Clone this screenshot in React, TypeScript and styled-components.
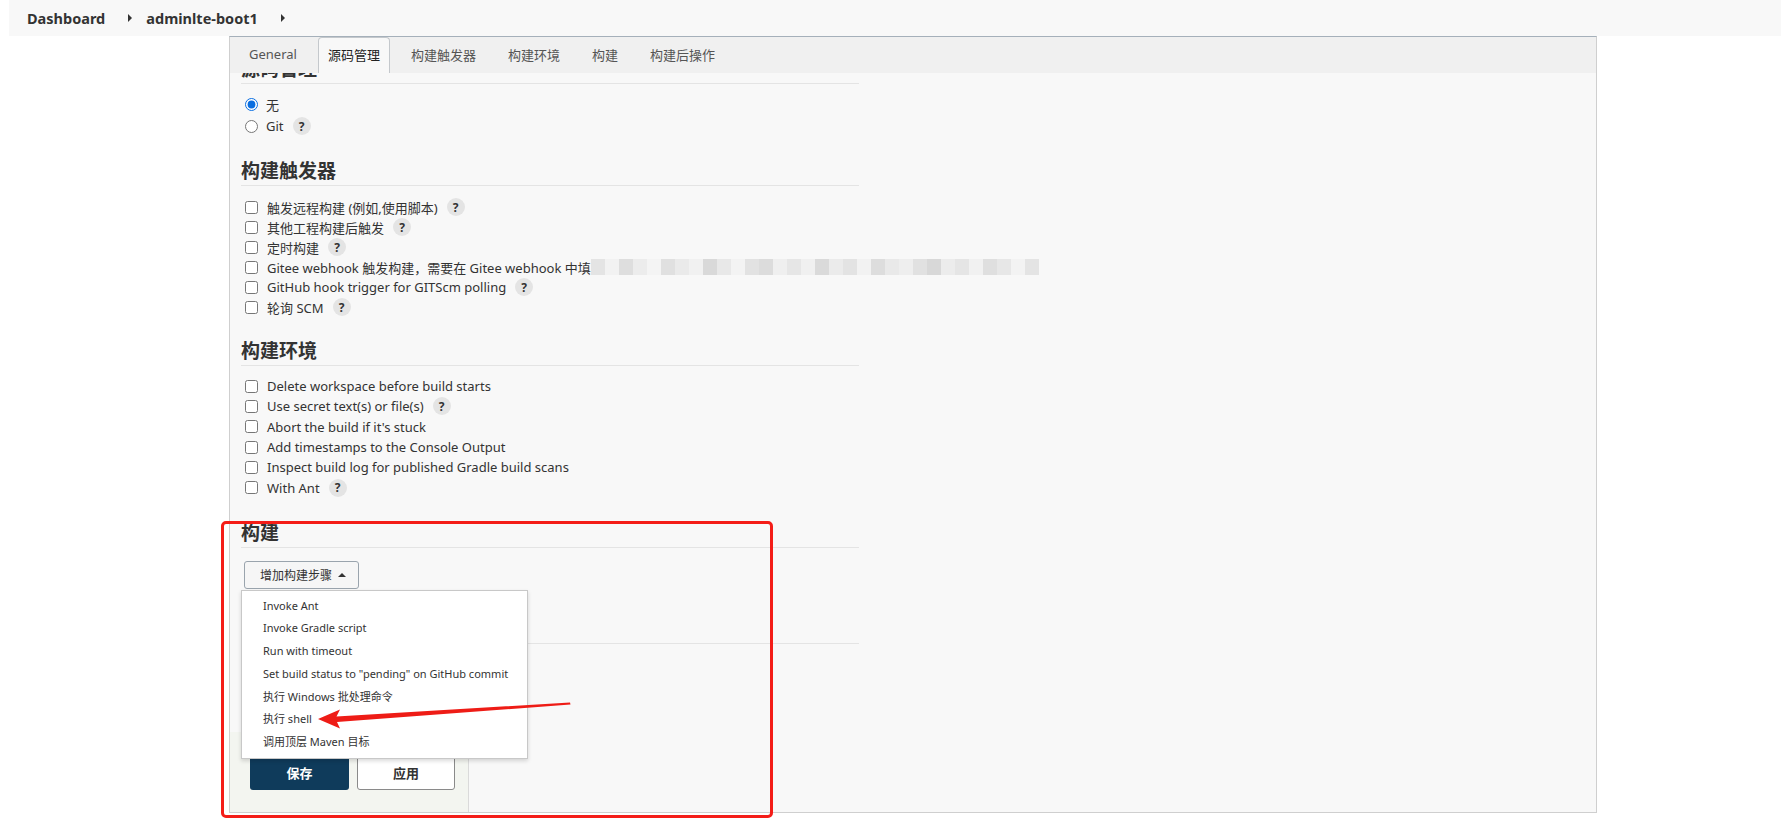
import styled, { createGlobalStyle } from "styled-components";

const GlobalStyle = createGlobalStyle`
  html, body {
    margin: 0;
    padding: 0;
    background: #ffffff;
  }
  body {
    font-family: "Segoe UI", "Noto Sans", "Noto Sans CJK SC", sans-serif;
    color: #333;
  }
`;

const tabs = ["General", "源码管理", "构建触发器", "构建环境", "构建", "构建后操作"];

const triggers = [
  { label: "触发远程构建 (例如,使用脚本)", help: true },
  { label: "其他工程构建后触发", help: true },
  { label: "定时构建", help: true },
  { label: "Gitee webhook 触发构建，需要在 Gitee webhook 中填", help: false, masked: true },
  { label: "GitHub hook trigger for GITScm polling", help: true },
  { label: "轮询 SCM", help: true },
];

const environment = [
  { label: "Delete workspace before build starts", help: false },
  { label: "Use secret text(s) or file(s)", help: true },
  { label: "Abort the build if it's stuck", help: false },
  { label: "Add timestamps to the Console Output", help: false },
  { label: "Inspect build log for published Gradle build scans", help: false },
  { label: "With Ant", help: true },
];

const buildSteps = [
  "Invoke Ant",
  "Invoke Gradle script",
  "Run with timeout",
  'Set build status to "pending" on GitHub commit',
  "执行 Windows 批处理命令",
  "执行 shell",
  "调用顶层 Maven 目标",
];

// pixelated blur behind the Gitee line
const mosaic = [
  "#e4e4e4", "#f2f2f2", "#dedede", "#ececec", "#f4f4f4", "#e0e0e0", "#eaeaea",
  "#f1f1f1", "#d9d9d9", "#e8e8e8", "#f3f3f3", "#e2e2e2", "#dcdcdc", "#efefef",
  "#e6e6e6", "#f0f0f0", "#dadada", "#ebebeb", "#e3e3e3", "#f2f2f2", "#dddddd",
  "#e9e9e9", "#eeeeee", "#e1e1e1", "#d8d8d8", "#ececec", "#e5e5e5", "#f1f1f1",
  "#dfdfdf", "#e7e7e7", "#f3f3f3", "#e4e4e4",
];

function Help() {
  return <HelpBadge>?</HelpBadge>;
}

function App() {
  return (
    <Page>
      <GlobalStyle />
      <Breadcrumbs>
        <Crumb>Dashboard</Crumb>
        <Caret />
        <Crumb>adminlte-boot1</Crumb>
        <Caret />
      </Breadcrumbs>

      <Panel>
        <TabBar>
          {tabs.map((t, i) => (
            <Tab key={t} $active={i === 1}>
              {t}
            </Tab>
          ))}
        </TabBar>

        <Content>
          <Column>
            <SectionTitle $first>源码管理</SectionTitle>
            <List $gap={10} $row={21.5}>
              <Row>
                <Radio type="radio" name="scm" defaultChecked />
                <Label>无</Label>
              </Row>
              <Row>
                <Radio type="radio" name="scm" />
                <Label>Git</Label>
                <Help />
              </Row>
            </List>

            <SectionTitle>构建触发器</SectionTitle>
            <List $gap={11} $row={20}>
              {triggers.map((t) => (
                <Row key={t.label}>
                  <Check type="checkbox" />
                  <Label>{t.label}</Label>
                  {t.help && <Help />}
                  {t.masked && (
                    <Mosaic>
                      {mosaic.map((c, i) => (
                        <MosaicCell key={i} $shade={c} />
                      ))}
                    </Mosaic>
                  )}
                </Row>
              ))}
            </List>

            <SectionTitle>构建环境</SectionTitle>
            <List $gap={10} $row={20.3}>
              {environment.map((t) => (
                <Row key={t.label}>
                  <Check type="checkbox" />
                  <Label>{t.label}</Label>
                  {t.help && <Help />}
                </Row>
              ))}
            </List>

            <SectionTitle $gap={23}>构建</SectionTitle>
            <StepArea>
              <StepButton>
                增加构建步骤 <UpCaret />
              </StepButton>
              <Menu>
                {buildSteps.map((s) => (
                  <MenuItem key={s}>{s}</MenuItem>
                ))}
              </Menu>
            </StepArea>

            <SectionTitle $gap={28}>构建后操作</SectionTitle>
          </Column>
        </Content>

        <BottomBar>
          <ButtonDock>
            <SaveButton>保存</SaveButton>
            <ApplyButton>应用</ApplyButton>
          </ButtonDock>
        </BottomBar>
      </Panel>

      <Highlight />
      <Arrow viewBox="0 0 260 36" width="260" height="36">
        <polygon
          points="3,23 25,13.5 21.5,20.5 255,6.5 255.5,8.5 22,26 25,32.5"
          fill="#ee1c16"
        />
      </Arrow>
    </Page>
  );
}

const Page = styled.div`
  position: relative;
  width: 1781px;
  height: 836px;
  overflow: hidden;
`;

const Breadcrumbs = styled.div`
  display: flex;
  align-items: center;
  height: 36px;
  margin-left: 9px;
  padding-left: 18px;
  background: #f8f8f8;
`;

const Crumb = styled.span`
  font-size: 14.5px;
  font-weight: 700;
  color: #333;
`;

const Caret = styled.span`
  width: 0;
  height: 0;
  margin: 0 14px 0 23px;
  border-left: 4px solid #333;
  border-top: 4px solid transparent;
  border-bottom: 4px solid transparent;
`;

const Panel = styled.div`
  display: flex;
  flex-direction: column;
  width: 1366px;
  height: 775px;
  margin-left: 229px;
  background: #f8f8f8;
  border: 1px solid #cfcfcf;
  border-top: 1px solid #a5b0ba;
`;

const TabBar = styled.div`
  position: relative;
  z-index: 1;
  display: flex;
  align-items: flex-end;
  flex-shrink: 0;
  height: 36px;
  padding-left: 3px;
  background: #f0f0f0;
`;

const Tab = styled.div<{ $active?: boolean }>`
  display: flex;
  align-items: center;
  height: 32px;
  padding: 0 ${(p) => (p.$active ? "9px" : "15px")} 3px;
  margin: 0 ${(p) => (p.$active ? "5px" : "0")};
  font-size: 13px;
  color: ${(p) => (p.$active ? "#222" : "#555")};
  background: ${(p) => (p.$active ? "#f8f8f8" : "transparent")};
  border: 1px solid ${(p) => (p.$active ? "#c4c8cc" : "transparent")};
  border-bottom: none;
  border-radius: 4px 4px 0 0;
`;

const Content = styled.div`
  flex: 1;
  padding-left: 11px;
`;

const Column = styled.div`
  width: 618px;
`;

const SectionTitle = styled.div<{ $first?: boolean; $gap?: number }>`
  height: 24px;
  line-height: 24px;
  margin-top: ${(p) => (p.$first ? -16 : p.$gap ?? 22)}px;
  padding-bottom: 2px;
  font-size: 19px;
  font-weight: 700;
  color: #333;
  border-bottom: 1px solid #e4e4e4;
`;

const List = styled.div<{ $gap: number; $row: number }>`
  display: flex;
  flex-direction: column;
  margin-top: ${(p) => p.$gap}px;

  & > label {
    height: ${(p) => p.$row}px;
  }
`;

const Row = styled.label`
  display: flex;
  align-items: center;
  font-size: 13px;
  white-space: nowrap;
`;

const Check = styled.input`
  width: 13px;
  height: 13px;
  margin: 0 9px 0 4px;
`;

const Radio = styled.input`
  width: 13px;
  height: 13px;
  margin: 0 8px 0 4px;
  accent-color: #0a6ee0;
`;

const Label = styled.span`
  color: #333;
`;

const HelpBadge = styled.span`
  display: inline-flex;
  align-items: center;
  justify-content: center;
  width: 18px;
  height: 18px;
  margin-left: 9px;
  border-radius: 50%;
  background: #e4e4e4;
  font-size: 12px;
  font-weight: 700;
  color: #333;
`;

const Mosaic = styled.span`
  display: inline-flex;
  height: 16px;
`;

const MosaicCell = styled.span<{ $shade: string }>`
  width: 14px;
  height: 16px;
  background: ${(p) => p.$shade};
`;

const StepArea = styled.div`
  position: relative;
  margin-top: 13px;
  padding-left: 3px;
`;

const StepButton = styled.button`
  display: flex;
  align-items: center;
  gap: 6px;
  width: 115px;
  height: 28px;
  padding: 0 0 0 15px;
  font-family: inherit;
  font-size: 12px;
  color: #333;
  background: #f6f6f6;
  border: 1px solid #9aa4ad;
  border-radius: 3px;
`;

const UpCaret = styled.span`
  width: 0;
  height: 0;
  border-bottom: 4px solid #333;
  border-left: 4px solid transparent;
  border-right: 4px solid transparent;
`;

const Menu = styled.div`
  position: absolute;
  z-index: 2;
  top: 29px;
  left: 0;
  width: 285px;
  padding: 4px 0 4px;
  background: #ffffff;
  border: 1px solid #c8c8c8;
  box-shadow: 0 2px 4px rgba(0, 0, 0, 0.15);
`;

const MenuItem = styled.div`
  height: 22.7px;
  line-height: 22.7px;
  padding-left: 21px;
  font-size: 11px;
  color: #333;
  white-space: nowrap;
`;

const BottomBar = styled.div`
  display: flex;
  flex-shrink: 0;
  height: 80px;
`;

const ButtonDock = styled.div`
  display: flex;
  gap: 8px;
  width: 218px;
  padding: 23px 0 0 20px;
  background: #f3f5f0;
  border-right: 1px solid #dadada;
`;

const SaveButton = styled.button`
  width: 99px;
  height: 35px;
  font-family: inherit;
  font-size: 13px;
  font-weight: 700;
  color: #fff;
  background: #0f3b5b;
  border: none;
  border-radius: 3px;
`;

const ApplyButton = styled.button`
  width: 98px;
  height: 35px;
  font-family: inherit;
  font-size: 13px;
  font-weight: 700;
  color: #333;
  background: #fff;
  border: 1px solid #8a8a8a;
  border-radius: 3px;
`;

const Highlight = styled.div`
  position: absolute;
  z-index: 3;
  left: 221px;
  top: 521px;
  width: 546px;
  height: 291px;
  border: 3px solid #f41d18;
  border-radius: 5px;
  pointer-events: none;
`;

const Arrow = styled.svg`
  position: absolute;
  z-index: 3;
  left: 315px;
  top: 696px;
`;

export default App;
